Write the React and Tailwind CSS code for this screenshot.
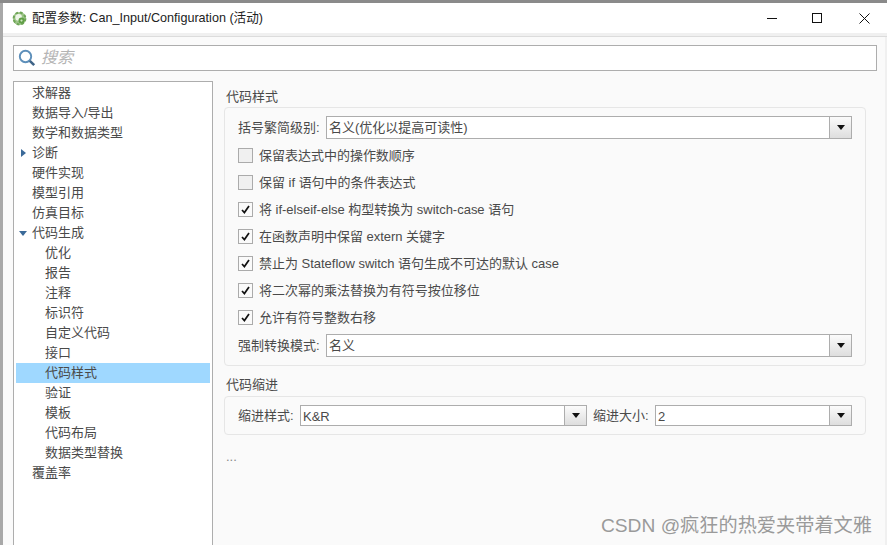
const FONT = "font-['Liberation_Sans','Noto_Sans_CJK_SC',sans-serif]";

const tree = [
  { label: '求解器', level: 0 },
  { label: '数据导入/导出', level: 0 },
  { label: '数学和数据类型', level: 0 },
  { label: '诊断', level: 0, arrow: 'right' },
  { label: '硬件实现', level: 0 },
  { label: '模型引用', level: 0 },
  { label: '仿真目标', level: 0 },
  { label: '代码生成', level: 0, arrow: 'down' },
  { label: '优化', level: 1 },
  { label: '报告', level: 1 },
  { label: '注释', level: 1 },
  { label: '标识符', level: 1 },
  { label: '自定义代码', level: 1 },
  { label: '接口', level: 1 },
  { label: '代码样式', level: 1, selected: true },
  { label: '验证', level: 1 },
  { label: '模板', level: 1 },
  { label: '代码布局', level: 1 },
  { label: '数据类型替换', level: 1 },
  { label: '覆盖率', level: 0 },
];

const checks = [
  { label: '保留表达式中的操作数顺序', on: false },
  { label: '保留 if 语句中的条件表达式', on: false },
  { label: '将 if-elseif-else 构型转换为 switch-case 语句', on: true },
  { label: '在函数声明中保留 extern 关键字', on: true },
  { label: '禁止为 Stateflow switch 语句生成不可达的默认 case', on: true },
  { label: '将二次幂的乘法替换为有符号按位移位', on: true },
  { label: '允许有符号整数右移', on: true },
];

function AppIcon() {
  return (
    <svg width="15" height="15" viewBox="0 0 15 15">
      <circle cx="7.5" cy="7.5" r="6.6" fill="#9cc488" />
      <circle cx="7.5" cy="7.5" r="5.9" fill="none" stroke="#6fa557" strokeWidth="2" strokeDasharray="2.6 2" />
      <circle cx="6.6" cy="6.4" r="3.3" fill="#eef5e8" />
      <circle cx="9.5" cy="9.6" r="3" fill="#5f9e45" />
      <circle cx="9.5" cy="9.6" r="1.1" fill="#cfe5bf" />
    </svg>
  );
}

function SearchIcon() {
  return (
    <svg width="18" height="18" viewBox="0 0 18 18">
      <circle cx="7.5" cy="7.5" r="5.7" fill="none" stroke="#5d8fba" strokeWidth="1.9" />
      <path d="M11.8 11.8 L16.2 16.2" stroke="#3f6488" strokeWidth="2.6" />
    </svg>
  );
}

function TreeRow({ item }) {
  return (
    <div className={`h-5 flex items-center relative ${item.selected ? 'bg-[#9fd8ff]' : ''} ${item.level ? 'pl-[29px]' : 'pl-4'}`}>
      {item.arrow === 'right' && (
        <svg className="absolute left-1 top-[6px]" width="7" height="8" viewBox="0 0 7 8">
          <path d="M1 0 L6 4 L1 8 Z" fill="#3b6a99" />
        </svg>
      )}
      {item.arrow === 'down' && (
        <svg className="absolute left-[3px] top-[7px]" width="8" height="7" viewBox="0 0 8 7">
          <path d="M0 1 L8 1 L4 6 Z" fill="#3b6a99" />
        </svg>
      )}
      <span className="text-[13px] text-[#4a4a4a] leading-5">{item.label}</span>
    </div>
  );
}

function Combo({ value, height = 'h-[23px]', className = '' }) {
  return (
    <div className={`flex ${height} border border-[#adadad] bg-white ${className}`}>
      <span className="flex-1 min-w-0 pl-[2px] text-[13px] text-[#4a4a4a] leading-[21px]">{value}</span>
      <div className="w-[22px] border-l border-[#adadad] bg-gradient-to-b from-[#fbfbfb] to-[#dedede] flex items-center justify-center">
        <svg width="8" height="5" viewBox="0 0 8 5">
          <path d="M0 0 L8 0 L4 5 Z" fill="#111" />
        </svg>
      </div>
    </div>
  );
}

function CheckRow({ label, on }) {
  return (
    <div className="h-[27px] flex items-center gap-[6px]">
      <div className={`w-[15px] h-[15px] border border-[#ababab] flex items-center justify-center ${on ? 'bg-[#fafafa]' : 'bg-[#f0f0f0]'}`}>
        {on && (
          <svg width="11" height="11" viewBox="0 0 11 11">
            <path d="M2 6 L4.4 8.6 L9 2" fill="none" stroke="#111" strokeWidth="1.7" />
          </svg>
        )}
      </div>
      <span className="text-[13px] text-[#4a4a4a] tracking-[-0.015px]">{label}</span>
    </div>
  );
}

export default function App() {
  return (
    <div className={`w-[887px] h-[545px] overflow-hidden flex flex-col bg-[#fafafa] relative ${FONT}`}>
      <div className="h-[3px] bg-[#8a8a8a] shrink-0" />
      <div className="flex flex-1 min-h-0">
        <div className="w-[3px] bg-[#a8a8a8] shrink-0" />
        <div className="flex-1 min-w-0 flex flex-col">
          {/* title bar */}
          <div className="h-[30px] bg-white flex items-center shrink-0">
            <div className="ml-[9px] mr-[5px] h-[15px]"><AppIcon /></div>
            <span className="text-[12.6px] text-[#222]">配置参数: Can_Input/Configuration (活动)</span>
            <div className="ml-auto flex items-center">
              <svg className="mr-[34px]" width="11" height="11" viewBox="0 0 11 11"><path d="M0 5.5 H10" stroke="#111" /></svg>
              <svg className="mr-[36px]" width="11" height="11" viewBox="0 0 11 11"><rect x="0.5" y="0.5" width="9" height="9" fill="none" stroke="#111" /></svg>
              <svg className="mr-[17px]" width="11" height="11" viewBox="0 0 11 11"><path d="M0.5 0.5 L10.5 10.5 M10.5 0.5 L0.5 10.5" stroke="#111" /></svg>
            </div>
          </div>
          <div className="h-[4px] bg-[#f0f0f0] border-b border-[#dcdcdc] shrink-0" />
          <div className="flex flex-1 min-h-0">
            <div className="flex-1 min-w-0 flex flex-col">
              {/* search */}
              <div className="pl-[10px] pr-[8px] pt-[8px] shrink-0">
                <div className="h-[26px] border border-[#adadad] bg-white flex items-center pl-1 gap-[5px]">
                  <SearchIcon />
                  <span className="text-[16px] italic text-[#b4b4b4]">搜索</span>
                </div>
              </div>
              <div className="flex flex-1 min-h-0 pt-[10px]">
                {/* tree */}
                <div className="ml-[10px] w-[200px] border border-[#adadad] border-b-0 bg-white px-[2px] shrink-0">
                  <div className="pt-[1px]">
                    {tree.map((t) => <TreeRow key={t.label} item={t} />)}
                  </div>
                </div>
                {/* right panel */}
                <div className="flex-1 min-w-0 pl-[11px] pr-[19px] pt-[7px]">
                  <div className="text-[13px] text-[#4a4a4a] leading-[18px] pl-[2px]">代码样式</div>
                  <div className="mt-[1px] rounded-[4px] border border-[#e6e6e6] px-[13px] pt-[8px] pb-[8px]">
                    <div className="flex items-center h-[23px]">
                      <span className="text-[13px] text-[#4a4a4a] w-[88px] shrink-0">括号繁简级别:</span>
                      <Combo value="名义(优化以提高可读性)" className="flex-1 min-w-0" />
                    </div>
                    <div className="pt-[3px]">
                      {checks.map((c) => <CheckRow key={c.label} label={c.label} on={c.on} />)}
                    </div>
                    <div className="flex items-center h-[23px] mt-[3px]">
                      <span className="text-[13px] text-[#4a4a4a] w-[88px] shrink-0">强制转换模式:</span>
                      <Combo value="名义" className="flex-1 min-w-0" />
                    </div>
                  </div>
                  <div className="mt-[10px] text-[13px] text-[#4a4a4a] leading-[18px] pl-[2px]">代码缩进</div>
                  <div className="mt-[2px] rounded-[4px] border border-[#e6e6e6] px-[13px] pt-[8px] pb-[8px] flex items-center">
                    <span className="text-[13px] text-[#4a4a4a] w-[62px] shrink-0">缩进样式:</span>
                    <Combo value="K&R" height="h-[21px]" className="w-[287px] shrink-0" />
                    <span className="text-[13px] text-[#4a4a4a] ml-[6px] w-[62px] shrink-0">缩进大小:</span>
                    <Combo value="2" height="h-[21px]" className="flex-1 min-w-0" />
                  </div>
                  <div className="mt-[12px] text-[13px] text-[#888] pl-[2px]">...</div>
                </div>
              </div>
            </div>
            <div className="w-[2px] bg-[#f0f0f0] shrink-0" />
          </div>
        </div>
      </div>
      {/* watermark */}
      <div className="absolute right-[15px] bottom-[4px] text-[19.2px] text-[#9a9a9a]">CSDN @疯狂的热爱夹带着文雅</div>
    </div>
  );
}
